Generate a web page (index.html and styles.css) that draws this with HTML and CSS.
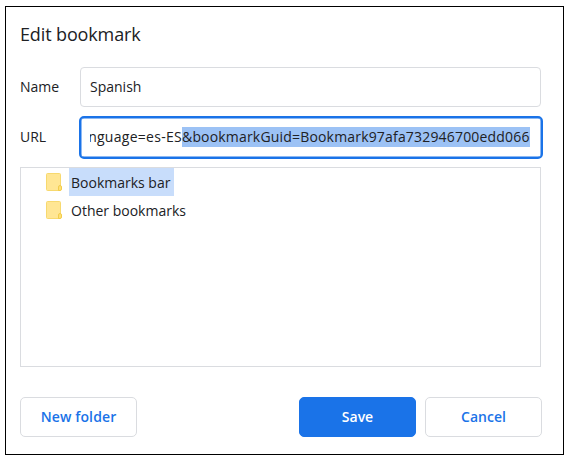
FILE: index.html
```html
<!DOCTYPE html>
<html lang="en">
<head>
<meta charset="utf-8">
<title>Edit bookmark</title>
<link rel="stylesheet" href="styles.css">
</head>
<body>
<main class="dialog">
  <h1 class="title">Edit bookmark</h1>
  <div class="field">
    <span class="label">Name</span>
    <div class="input">Spanish</div>
  </div>
  <div class="field url-field">
    <span class="label">URL</span>
    <div class="input focused"><div class="clip"><span class="url-start">nguage=es-ES</span><span class="selection">&amp;bookmarkGuid=Bookmark97afa732946700edd066</span></div></div>
  </div>
  <div class="tree">
    <div class="row">
      <svg class="folder" width="16" height="19" viewBox="0 0 16 19"><path d="M1.500.5h12a1 1 0 0 1 1 1v15a1 1 0 0 1-1 1h-12a1 1 0 0 1-1-1v-15a1 1 0 0 1 1-1z" fill="#ffe694" stroke="#f7d96f"/><path d="M12.500 17.500v-3.500q0-1.500 1.500-1.500t1.500 1.500v2q0 1.500-1.500 1.500z" fill="#ffe176" stroke="#f2cc4c"/></svg>
      <span class="item selected">Bookmarks bar</span>
    </div>
    <div class="row">
      <svg class="folder" width="16" height="19" viewBox="0 0 16 19"><path d="M1.500.5h12a1 1 0 0 1 1 1v15a1 1 0 0 1-1 1h-12a1 1 0 0 1-1-1v-15a1 1 0 0 1 1-1z" fill="#ffe694" stroke="#f7d96f"/><path d="M12.500 17.500v-3.500q0-1.500 1.500-1.500t1.500 1.500v2q0 1.500-1.500 1.500z" fill="#ffe176" stroke="#f2cc4c"/></svg>
      <span class="item">Other bookmarks</span>
    </div>
  </div>
  <div class="actions">
    <button class="button new">New folder</button>
    <button class="button save">Save</button>
    <button class="button">Cancel</button>
  </div>
</main>
</body>
</html>
```
FILE: styles.css
```css
* { box-sizing: border-box; }
body {
  margin: 0;
  padding: 6px 0 0 5px;
  background: #fff;
  color: #202124;
  font: 14px/20px "Open Sans", "Noto Sans", sans-serif;
  white-space: nowrap;
}
.dialog {
  width: 559px;
  height: 449px;
  padding: 14px 20px 0 14px;
  border: 1px solid #000;
}
.title {
  height: 26px;
  margin: 0 0 20px;
  font-size: 18px;
  font-weight: 400;
  line-height: 26px;
  letter-spacing: -.13px;
}
.field { display: flex; align-items: center; width: 521px; height: 40px; }
.url-field { margin-top: 10px; }
.label { flex: none; width: 60px; }
.input {
  display: flex;
  align-items: center;
  width: 461px;
  height: 40px;
  padding-left: 9px;
  border: 1px solid #dadce0;
  border-radius: 4px;
}
.focused {
  flex: none;
  width: 464px;
  height: 43px;
  margin-left: -1px;
  padding-bottom: 1px;
  border: 2px solid #1a73e8;
  border-radius: 5px;
  box-shadow: inset 0 0 0 .5px #1a73e8;
}
.clip { display: flex; justify-content: flex-end; width: 440px; overflow: hidden; }
.url-start, .selection { flex: none; }
.url-start { letter-spacing: .28px; }
.selection { width: 348px; background: #9cc2f5; line-height: 20px; letter-spacing: .18px; }
.tree {
  width: 521px;
  height: 200px;
  margin-top: 10px;
  border: 1px solid #dadce0;
}
.row { display: flex; height: 28px; }
.folder { margin: 5px 7px 0 25px; }
.item { height: 28px; padding: 0 4px 0 2px; line-height: 29px; }
.selected { width: 105px; background: #c8ddfb; }
.actions { display: flex; width: 522px; margin-top: 30px; }
.button {
  width: 117px;
  height: 40px;
  padding: 0;
  border: 1px solid #dadce0;
  border-radius: 5px;
  background: #fff;
  color: #1a73e8;
  font: 550 14px/20px "Open Sans", "Noto Sans", sans-serif;
}
.new { letter-spacing: .13px; }
.save { margin-left: auto; margin-right: 9px; border-color: #1a73e8; background: #1a73e8; color: #fff; font-weight: 650; }
```
